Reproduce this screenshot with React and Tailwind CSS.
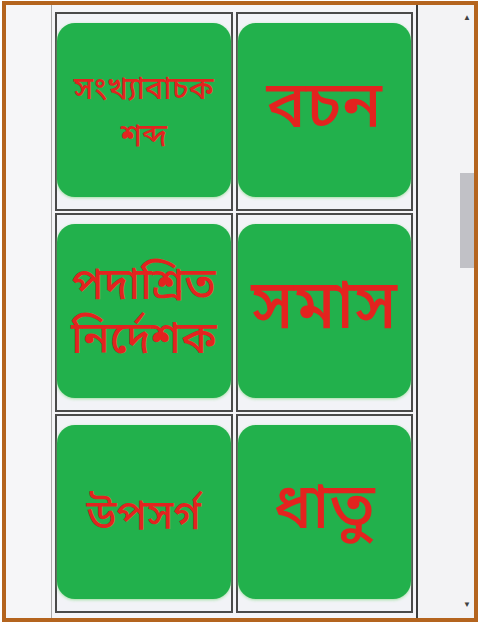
import React from 'react';

const items = [
  { label: 'সংখ্যাবাচক শব্দ', size: 'text-[31px] leading-[47px] pt-[10px]' },
  { label: 'বচন', size: 'text-[66px] leading-[70px]' },
  { label: 'পদাশ্রিত নির্দেশক', size: 'text-[44px] leading-[54px] pt-[8px]' },
  { label: 'সমাস', size: 'text-[68px] leading-[70px]' },
  { label: 'উপসর্গ', size: 'text-[42px] leading-[50px] pt-[12px]' },
  { label: 'ধাতু', size: 'text-[64px] leading-[70px]' },
];

const Tile = ({ label, size }) => (
  <div className="h-[199px] border-2 border-[#4a4a4a] bg-[#f2f3f7] pt-[9px]">
    <button
      type="button"
      className={`flex h-[174px] w-full items-center justify-center rounded-[18px] bg-[#22b14c] text-center font-medium text-[#e3231f] shadow-[0_1px_3px_rgba(140,220,140,0.8)] ${size}`}
      style={{ fontFamily: '"Noto Sans Bengali", "Noto Sans", "DejaVu Sans", sans-serif' }}
    >
      {label}
    </button>
  </div>
);

const App = () => {
  return (
    <div className="h-[626px] w-[480px] overflow-hidden bg-white">
      <div className="mx-[2px] mt-[1px] flex h-[621px] border-4 border-[#b4641e] bg-[#f6f6f8]">
        {/* left gutter */}
        <div className="w-[45px] shrink-0" />

        {/* table */}
        <div className="flex w-[367px] shrink-0 flex-col border-l border-l-[#a9a9a9] border-r-2 border-r-[#3c3c3c] bg-[#f5f5f8] px-[3px] pt-[7px]">
          <div className="grid grid-cols-2 gap-x-[3px] gap-y-[2px]">
            {items.map((it) => (
              <Tile key={it.label} label={it.label} size={it.size} />
            ))}
          </div>
        </div>

        {/* scrollbar */}
        <div className="flex flex-1 flex-col items-end bg-[#f3f3f5]">
          <div className="flex h-[18px] w-[14px] items-end justify-center pb-[2px] text-[8px] leading-none text-[#404040]">▲</div>
          <div className="flex-1 w-[14px]">
            <div className="mt-[150px] h-[95px] w-[14px] bg-[#c1c1c6]" />
          </div>
          <div className="flex h-[18px] w-[14px] items-start justify-center text-[8px] leading-none text-[#404040]">▼</div>
        </div>
      </div>
    </div>
  );
};

export default App;
